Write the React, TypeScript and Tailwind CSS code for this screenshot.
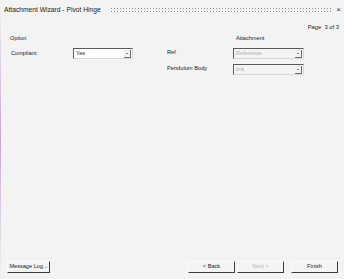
import React from 'react';

function Combo({ value, width, disabled }: { value: string; width: string; disabled?: boolean }) {
  return (
    <div
      className={`${width} h-[11px] flex items-center border border-t-[#5a5a5a] border-l-[#5a5a5a] border-b-[#d8d8d8] border-r-[#d8d8d8] ${
        disabled ? 'bg-[#f4f4f4]' : 'bg-white'
      }`}
    >
      <span className={`flex-1 pl-[2px] text-[5.6px] leading-none ${disabled ? 'text-[#b0b0b0]' : 'text-[#222]'}`}>
        {value}
      </span>
      <div className="w-[7px] h-[8px] mr-[1px] flex items-center justify-center bg-[#f0f0f0] border-r border-b border-[#707070]">
        <div className="w-0 h-0 border-l-[1.5px] border-r-[1.5px] border-t-[1.5px] border-l-transparent border-r-transparent border-t-[#222]" />
      </div>
    </div>
  );
}

function Btn({ label, disabled, width = 'w-[47px]' }: { label: string; disabled?: boolean; width?: string }) {
  return (
    <div
      className={`${width} h-[12px] flex items-center justify-center bg-[#f4f4f4] border border-t-[#fafafa] border-l-[#fafafa] border-b-[#3c3c3c] border-r-[#3c3c3c] text-[5.6px] leading-none ${
        disabled ? 'text-[#b4b4b4]' : 'text-[#222]'
      }`}
    >
      {label}
    </div>
  );
}

export default function App() {
  return (
    <div className="w-[344px] h-[279px] flex bg-[#f3f3f3] font-['Liberation_Sans',Arial,sans-serif] overflow-hidden">
      <div className="w-[1px] h-full bg-gradient-to-b from-[#f3f3f3] via-[#c9a3d4] to-[#f3f3f3]" />
      <div className="flex-1 flex flex-col">
        {/* title bar */}
        <div className="h-[20px] flex items-center pl-[3px] pr-[3px]">
          <span className="text-[6.7px] leading-none text-[#1a1a1a] whitespace-nowrap">Attachment Wizard - Pivot Hinge</span>
          <div className="flex-1 h-[6px] ml-[9px] mr-[5px] bg-[radial-gradient(circle,#8a8a8a_0.7px,transparent_0.9px)] bg-[length:3px_3px]" />
          <span className="text-[8px] leading-none text-[#333]">×</span>
        </div>

        <div className="flex justify-end pr-[5px] mt-[5px]">
          <span className="text-[5.8px] leading-none text-[#222]">Page&nbsp; 3 of 3</span>
        </div>

        <div className="flex mt-[5px]">
          {/* left column */}
          <div className="w-[166px] flex flex-col pl-[9px]">
            <span className="text-[5.6px] leading-none text-[#222]">Option</span>
            <div className="flex items-center mt-[7px]">
              <span className="w-[63px] pl-[1px] text-[5.6px] leading-none text-[#222]">Compliant:</span>
              <Combo value="Yes" width="w-[60px]" />
            </div>
          </div>
          {/* right column */}
          <div className="flex-1 flex flex-col">
            <span className="pl-[69px] text-[5.6px] leading-none text-[#222]">Attachment</span>
            <div className="flex items-center mt-[7px]">
              <span className="w-[66px] text-[5.7px] leading-none text-[#222] -mt-[3px]">Ref</span>
              <Combo value="Reference" width="w-[71px]" disabled />
            </div>
            <div className="flex items-center mt-[5px]">
              <span className="w-[66px] text-[5.7px] leading-none text-[#222] -mt-[3px]">Pendulum Body</span>
              <Combo value="link" width="w-[71px]" disabled />
            </div>
          </div>
        </div>

        <div className="flex-1" />

        <div className="flex items-center pl-[6px] pr-[6px] mb-[6px]">
          <Btn label="Message Log..." width="w-[43px]" />
          <div className="flex-1" />
          <Btn label="< Back" />
          <div className="w-[2px]" />
          <Btn label="Next >" disabled />
          <div className="w-[7px]" />
          <Btn label="Finish" />
        </div>
      </div>
    </div>
  );
}
